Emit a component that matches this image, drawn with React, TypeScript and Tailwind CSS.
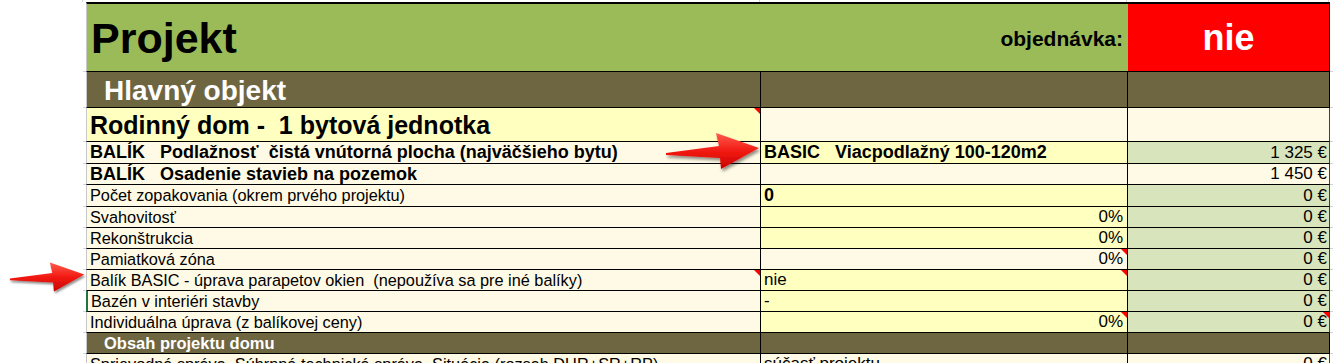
import React from 'react';

type RowData = {
  h: string;
  lh: string;
  a: string;
  aBold?: boolean;
  aBg: string;
  aTri?: boolean;
  b?: string;
  bBold?: boolean;
  bRight?: boolean;
  bBg: string;
  bTri?: boolean;
  c?: string;
  cBg: string;
  cTri?: boolean;
  mark?: boolean;
};

const CREAM = 'bg-[#fffae6]';
const YEL = 'bg-[#ffffc0]';
const GRN = 'bg-[#d8e4bc]';

const ROWS: RowData[] = [
  {
    h: 'h-[22px]',
    lh: 'leading-[21px]',
    a: 'BALÍK   Podlažnosť  čistá vnútorná plocha (najväčšieho bytu)',
    aBold: true,
    aBg: CREAM,
    b: 'BASIC   Viacpodlažný 100-120m2',
    bBold: true,
    bBg: YEL,
    c: '1 325 €',
    cBg: GRN,
  },
  {
    h: 'h-[21px]',
    lh: 'leading-[20px]',
    a: 'BALÍK   Osadenie stavieb na pozemok',
    aBold: true,
    aBg: CREAM,
    bBg: CREAM,
    c: '1 450 €',
    cBg: CREAM,
  },
  {
    h: 'h-[22px]',
    lh: 'leading-[21px]',
    a: 'Počet zopakovania (okrem prvého projektu)',
    aBg: CREAM,
    b: '0',
    bBold: true,
    bBg: YEL,
    c: '0 €',
    cBg: GRN,
  },
  { h: 'h-[21px]', lh: 'leading-[20px]', a: 'Svahovitosť', aBg: CREAM, b: '0%', bRight: true, bBg: YEL, c: '0 €', cBg: GRN },
  { h: 'h-[21px]', lh: 'leading-[20px]', a: 'Rekonštrukcia', aBg: CREAM, b: '0%', bRight: true, bBg: YEL, c: '0 €', cBg: GRN },
  {
    h: 'h-[21px]',
    lh: 'leading-[20px]',
    a: 'Pamiatková zóna',
    aBg: CREAM,
    b: '0%',
    bRight: true,
    bBg: CREAM,
    bTri: true,
    c: '0 €',
    cBg: GRN,
  },
  {
    h: 'h-[21px]',
    lh: 'leading-[20px]',
    a: 'Balík BASIC - úprava parapetov okien  (nepoužíva sa pre iné balíky)',
    aBg: CREAM,
    aTri: true,
    b: 'nie',
    bBg: YEL,
    bTri: true,
    c: '0 €',
    cBg: GRN,
  },
  {
    h: 'h-[21px]',
    lh: 'leading-[20px]',
    a: 'Bazén v interiéri stavby',
    aBg: CREAM,
    b: '-',
    bBg: YEL,
    c: '0 €',
    cBg: GRN,
    mark: true,
  },
  {
    h: 'h-[21px]',
    lh: 'leading-[20px]',
    a: 'Individuálna úprava (z balíkovej ceny)',
    aBg: CREAM,
    b: '0%',
    bRight: true,
    bBg: YEL,
    bTri: true,
    c: '0 €',
    cBg: GRN,
    cTri: true,
  },
];

const Tri = () => (
  <span className="absolute right-0 top-0 h-0 w-0 border-l-[6px] border-t-[6px] border-l-transparent border-t-[#ff0000]" />
);

const LeftGutter = () => (
  <>
    <div className="w-[83px] shrink-0" />
    <div className="w-[3px] shrink-0 border-b border-[#d4d4d4]" />
  </>
);

const RightGutter = () => <div className="w-[3px] shrink-0 border-b border-[#d4d4d4]" />;

const Arrow = ({ className, id }: { className: string; id: string }) => (
  <svg className={className} viewBox="0 0 96 40" overflow="visible">
    <defs>
      <linearGradient id={`g-${id}`} x1="0" y1="0" x2="0" y2="1">
        <stop offset="0" stopColor="#ff5b4d" />
        <stop offset="0.5" stopColor="#f21a12" />
        <stop offset="1" stopColor="#c80000" />
      </linearGradient>
      <filter id={`s-${id}`} x="-20%" y="-30%" width="140%" height="170%">
        <feDropShadow dx="1.5" dy="2.5" stdDeviation="1.6" floodColor="#000" floodOpacity="0.45" />
      </filter>
    </defs>
    <polygon
      points="1,22 54,15 51,2 94,17 56,38 55,27 1,24"
      fill={`url(#g-${id})`}
      filter={`url(#s-${id})`}
    />
  </svg>
);

const SheetRow = ({ r }: { r: RowData }) => (
  <div className={`flex ${r.h}`}>
    <LeftGutter />
    <div
      className={`relative w-[675px] shrink-0 overflow-hidden whitespace-pre border-b border-r border-black pl-[3px] ${r.lh} ${r.aBg} ${
        r.mark ? 'border-l-2 border-l-[#217346]' : 'border-l border-l-[#c8c8c8]'
      } ${r.aBold ? 'text-[18px] font-bold' : 'text-[16.3px]'}`}
    >
      {r.a}
      {r.aTri && <Tri />}
    </div>
    <div
      className={`relative w-[367px] shrink-0 overflow-hidden whitespace-pre border-b border-r border-black ${r.lh} ${r.bBg} ${
        r.bRight ? 'pr-[4px] text-right' : 'pl-[3px]'
      } ${r.bBold ? 'text-[18px] font-bold' : 'text-[17px]'}`}
    >
      {r.b}
      {r.bTri && <Tri />}
    </div>
    <div
      className={`relative w-[202px] shrink-0 border-b border-r border-b-black border-r-[#404040] border-r-dashed pr-[2px] text-right text-[17px] ${r.lh} ${r.cBg}`}
    >
      {r.c}
      {r.cTri && <Tri />}
    </div>
    <RightGutter />
  </div>
);

export default function App() {
  return (
    <div className="relative w-[1333px] bg-white font-['Liberation_Sans',Arial,sans-serif] text-black">
      <div className="flex h-[2px]">
        <div className="w-[83px] shrink-0 border-r border-[#d4d4d4]" />
        <div className="w-[677px] shrink-0 border-r border-[#d4d4d4]" />
        <div className="w-[367px] shrink-0 border-r border-[#d4d4d4]" />
        <div className="w-[202px] shrink-0 border-r border-[#d4d4d4]" />
      </div>

      <div className="flex h-[70px]">
        <LeftGutter />
        <div className="flex w-[1042px] shrink-0 items-start justify-between border-b border-l border-t-2 border-b-black border-l-[#c8c8c8] border-t-black bg-[#9bbb59]">
          <span className="pl-[4px] pt-[2px] text-[43px] font-bold leading-[65px]">Projekt</span>
          <span className="pr-[5px] pt-[23px] text-[21px] font-bold leading-[24px]">objednávka:</span>
        </div>
        <div className="w-[202px] shrink-0 border-b border-r border-t-2 border-black bg-[#ff0000] pt-[14px] text-center text-[36px] font-bold leading-[40px] text-white">
          nie
        </div>
        <RightGutter />
      </div>

      <div className="flex h-[36px]">
        <LeftGutter />
        <div className="w-[675px] shrink-0 border-b border-l border-r border-black border-l-[#c8c8c8] bg-[#6e6641] pl-[17px] pt-[2px] text-[28px] font-bold leading-[33px] text-white">
          Hlavný objekt
        </div>
        <div className="w-[367px] shrink-0 border-b border-r border-black bg-[#6e6641]" />
        <div className="w-[202px] shrink-0 border-b border-r border-black bg-[#6e6641]" />
        <RightGutter />
      </div>

      <div className="flex h-[34px]">
        <LeftGutter />
        <div className="relative w-[675px] shrink-0 whitespace-pre border-b border-l border-r border-black border-l-[#c8c8c8] bg-[#ffffc0] pl-[3px] pt-[2px] text-[25px] font-bold leading-[31px]">
          Rodinný dom -  1 bytová jednotka
          <Tri />
        </div>
        <div className="w-[367px] shrink-0 border-b border-r border-black bg-[#fffae6]" />
        <div className="w-[202px] shrink-0 border-b border-r border-b-black border-r-[#404040] border-r-dashed bg-[#fffae6]" />
        <RightGutter />
      </div>

      {ROWS.map((r) => (
        <SheetRow key={r.a} r={r} />
      ))}

      <div className="flex h-[21px]">
        <LeftGutter />
        <div className="w-[675px] shrink-0 border-b border-l border-r border-black border-l-[#c8c8c8] bg-[#6e6641] pl-[17px] text-[16.5px] font-bold leading-[20px] text-white">
          Obsah projektu domu
        </div>
        <div className="w-[367px] shrink-0 border-b border-r border-black bg-[#6e6641]" />
        <div className="w-[202px] shrink-0 border-b border-r border-black bg-[#6e6641]" />
        <RightGutter />
      </div>

      <div className="flex h-[21px]">
        <LeftGutter />
        <div className="w-[675px] shrink-0 overflow-hidden whitespace-pre border-b border-l border-r border-black border-l-[#c8c8c8] bg-[#fffae6] pl-[3px] text-[16.3px] leading-[20px]">
          Sprievodná správa, Súhrnná technická správa, Situácia (rozsah DUR+SR+RP)
        </div>
        <div className="w-[367px] shrink-0 border-b border-r border-black bg-[#fffae6] pl-[3px] text-[17px] leading-[20px]">
          súčasť projektu
        </div>
        <div className="w-[202px] shrink-0 border-b border-r border-b-black border-r-[#404040] border-r-dashed bg-[#fffae6] pr-[2px] text-right text-[17px] leading-[20px]">
          0 €
        </div>
        <RightGutter />
      </div>

      <Arrow id="a1" className="absolute left-[665px] top-[131px] h-[40px] w-[96px]" />
      <Arrow id="a2" className="absolute left-[9px] top-[261px] h-[32px] w-[77px]" />
    </div>
  );
}
